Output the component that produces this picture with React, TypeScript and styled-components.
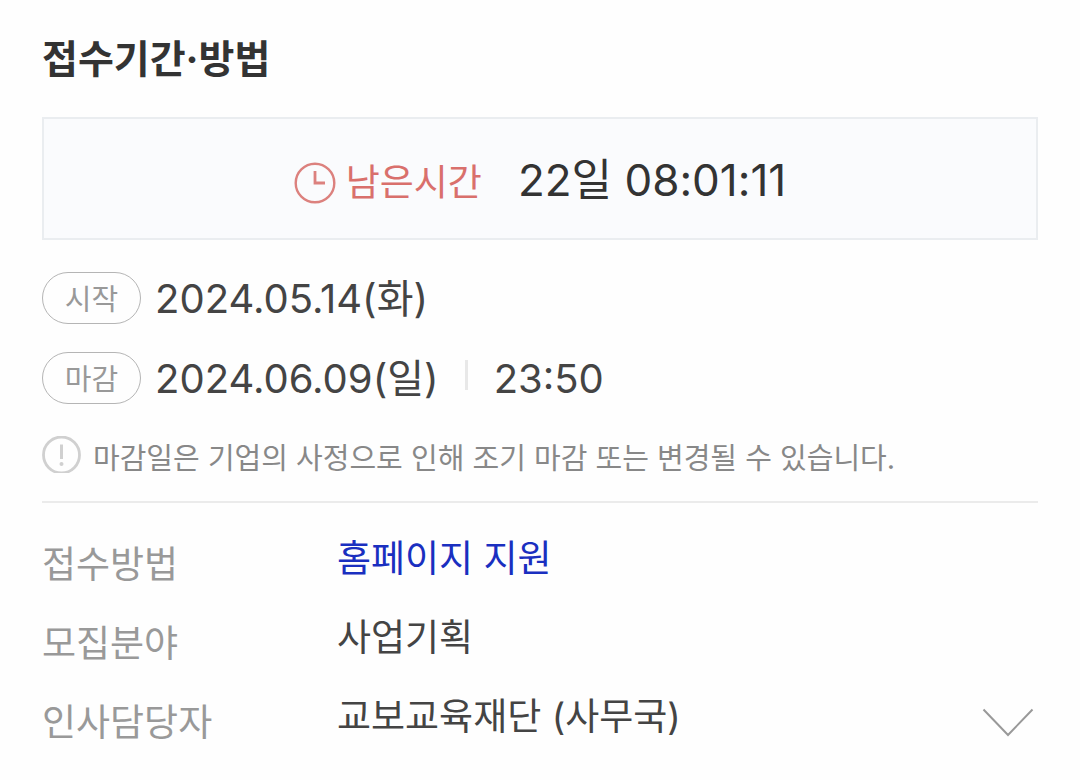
import React from "react";
import styled, { createGlobalStyle } from "styled-components";

const GlobalStyle = createGlobalStyle`
  *, *::before, *::after { box-sizing: border-box; }
  body {
    margin: 0;
    background: #fefefe;
    color: #444;
    font-family: Inter, "Noto Sans CJK KR", sans-serif;
  }
`;

const Section = styled.section`
  padding: 32px 42px 24px;
`;

const Title = styled.h2`
  margin: 0 0 32px;
  font-size: 39px;
  line-height: 53px;
  font-weight: 700;
  color: #333;
`;

const Countdown = styled.div`
  display: flex;
  align-items: center;
  justify-content: center;
  height: 123px;
  border: 2px solid #eaedf0;
  background: #fafbfd;
`;

const CountdownLabel = styled.span`
  display: flex;
  align-items: center;
  gap: 10px;
  margin-right: 36px;
  padding-top: 8px;
  font-size: 37px;
  line-height: 44px;
  color: #d9706c;
`;

const Remaining = styled.time`
  padding-top: 2px;
  font-size: 44px;
  line-height: 56px;
  color: #333;
`;

const Dates = styled.dl`
  display: grid;
  gap: 28px;
  margin: 32px 0 0;
`;

const DateRow = styled.div`
  display: flex;
  align-items: center;
`;

const Pill = styled.dt`
  width: 99px;
  height: 52px;
  margin-right: 14px;
  border: 1px solid #b5b5b5;
  border-radius: 26px;
  font-size: 29px;
  line-height: 54px;
  text-align: center;
  color: #999;
`;

const DateValue = styled.dd`
  display: flex;
  align-items: center;
  margin: 0;
  padding-top: 2px;
  font-size: 40px;
  line-height: 50px;
`;

const Divider = styled.span`
  width: 3px;
  height: 30px;
  margin: 0 26px 8px;
  background: #e8e8e8;
`;

const Note = styled.p`
  display: flex;
  align-items: flex-start;
  gap: 12px;
  margin: 32px 0 0;
  padding-bottom: 19px;
  border-bottom: 2px solid #ebebeb;
  font-size: 29px;
  line-height: 46px;
  color: #888;
`;

const Footer = styled.div`
  display: flex;
  align-items: flex-end;
  justify-content: space-between;
  margin-top: 28px;
`;

const Details = styled.dl`
  display: grid;
  gap: 24px;
  margin: 0;
`;

const DetailRow = styled.div`
  display: grid;
  grid-template-columns: 295px auto;
  font-size: 37px;
  line-height: 55px;
`;

const Term = styled.dt`
  padding-top: 6px;
  margin-bottom: -6px;
  color: #999;
`;

const Detail = styled.dd`
  margin: 0;
`;

const ApplyLink = styled.a`
  color: #1a2fc0;
  text-decoration: none;
`;

const ExpandButton = styled.button`
  display: flex;
  padding: 4px 4px 6px;
  border: 0;
  background: none;
  cursor: pointer;
`;

const ClockIcon = () => (
  <svg width="42" height="42" viewBox="0 0 42 42" fill="none" stroke="#dc817e" strokeWidth="2.4" aria-hidden="true">
    <circle cx="21" cy="21" r="19.3" />
    <path d="M21 9V21H31" strokeWidth="2.8" />
  </svg>
);

const NoticeIcon = () => (
  <svg width="39" height="37" viewBox="0 0 39 37" fill="none" stroke="#d0d0d0" aria-hidden="true">
    <circle cx="19.5" cy="19" r="18" strokeWidth="2.8" />
    <path d="M19.5 8.5V23" strokeWidth="3" />
    <circle cx="19.5" cy="28" r="2" fill="#d0d0d0" stroke="none" />
  </svg>
);

const ChevronIcon = () => (
  <svg width="52" height="30" viewBox="0 0 52 30" fill="none" stroke="#999" strokeWidth="2" aria-hidden="true">
    <path d="M1.5 1.5L26 27L50.5 1.5" />
  </svg>
);

const details = [
  { term: "접수방법", value: <ApplyLink href="#apply">홈페이지 지원</ApplyLink> },
  { term: "모집분야", value: "사업기획" },
  { term: "인사담당자", value: "교보교육재단 (사무국)" },
];

export default function App() {
  return (
    <>
      <GlobalStyle />
      <Section>
        <Title>접수기간·방법</Title>
        <Countdown>
          <CountdownLabel>
            <ClockIcon />
            남은시간
          </CountdownLabel>
          <Remaining>22일 08:01:11</Remaining>
        </Countdown>
        <Dates>
          <DateRow>
            <Pill>시작</Pill>
            <DateValue>2024.05.14(화)</DateValue>
          </DateRow>
          <DateRow>
            <Pill>마감</Pill>
            <DateValue>
              2024.06.09(일)
              <Divider />
              23:50
            </DateValue>
          </DateRow>
        </Dates>
        <Note>
          <NoticeIcon />
          마감일은 기업의 사정으로 인해 조기 마감 또는 변경될 수 있습니다.
        </Note>
        <Footer>
          <Details>
            {details.map(({ term, value }) => (
              <DetailRow key={term}>
                <Term>{term}</Term>
                <Detail>{value}</Detail>
              </DetailRow>
            ))}
          </Details>
          <ExpandButton type="button" aria-label="펼치기">
            <ChevronIcon />
          </ExpandButton>
        </Footer>
      </Section>
    </>
  );
}
